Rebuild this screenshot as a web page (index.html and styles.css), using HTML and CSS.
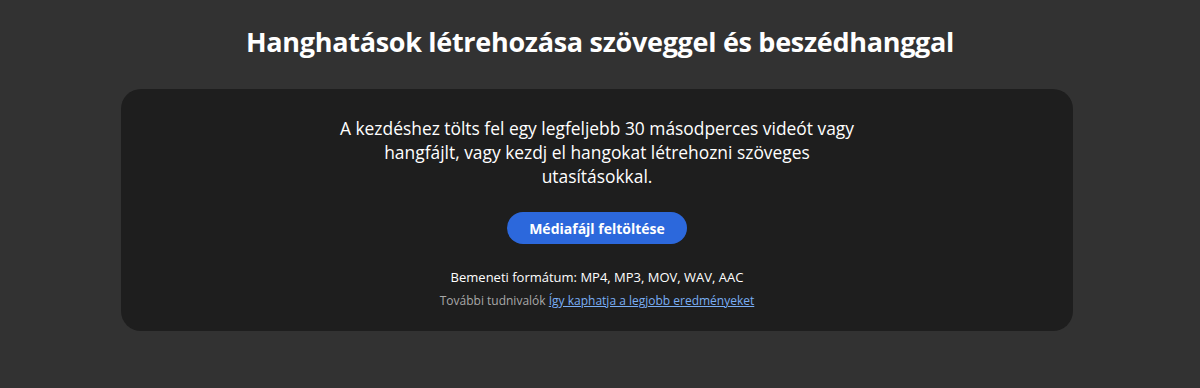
FILE: index.html
```html
<!DOCTYPE html>
<html lang="hu">
<head>
<meta charset="utf-8">
<link rel="stylesheet" href="styles.css">
</head>
<body>
<main class="page">
  <h1 class="title">Hanghatások létrehozása szöveggel és beszédhanggal</h1>
  <section class="card">
    <p class="intro">A kezdéshez tölts fel egy legfeljebb 30 másodperces videót vagy hangfájlt, vagy kezdj el hangokat létrehozni szöveges utasításokkal.</p>
    <button class="upload">Médiafájl feltöltése</button>
    <p class="formats">Bemeneti formátum: MP4, MP3, MOV, WAV, AAC</p>
    <p class="more">További tudnivalók <a href="#">Így kaphatja a legjobb eredményeket</a></p>
  </section>
</main>
</body>
</html>
```
FILE: styles.css
```css
* { box-sizing: border-box; }
html, body { margin: 0; padding: 0; }
body {
  background: #323232;
  color: #fff;
  font-family: "Open Sans", "Liberation Sans", sans-serif;
  width: 1200px;
  height: 388px;
  overflow: hidden;
}
.page {
  display: flex;
  flex-direction: column;
  align-items: center;
  padding-top: 24px;
}
.title {
  margin: 0;
  font-size: 27px;
  font-weight: 700;
  line-height: 36px;
  letter-spacing: -0.3px;
}
.card {
  margin-top: 29px;
  margin-left: -6px;
  width: 952px;
  height: 242px;
  background: #1e1e1e;
  border-radius: 20px;
  display: flex;
  flex-direction: column;
  align-items: center;
  padding-top: 27px;
}
.intro {
  margin: 0;
  width: 524px;
  text-align: center;
  font-size: 17.4px;
  font-weight: 500;
  line-height: 24px;
}
.upload {
  margin-top: 24px;
  width: 180px;
  height: 32px;
  border: none;
  border-radius: 16px;
  background: #2c68dc;
  color: #fff;
  font-family: inherit;
  font-size: 14px;
  font-weight: 700;
}
.formats {
  margin: 24px 0 0;
  font-size: 13px;
  font-weight: 500;
  line-height: 18px;
}
.more {
  margin: 6px 0 0;
  font-size: 12px;
  line-height: 18px;
  color: #a8a8a8;
}
.more a { color: #7aaef5; }
```
